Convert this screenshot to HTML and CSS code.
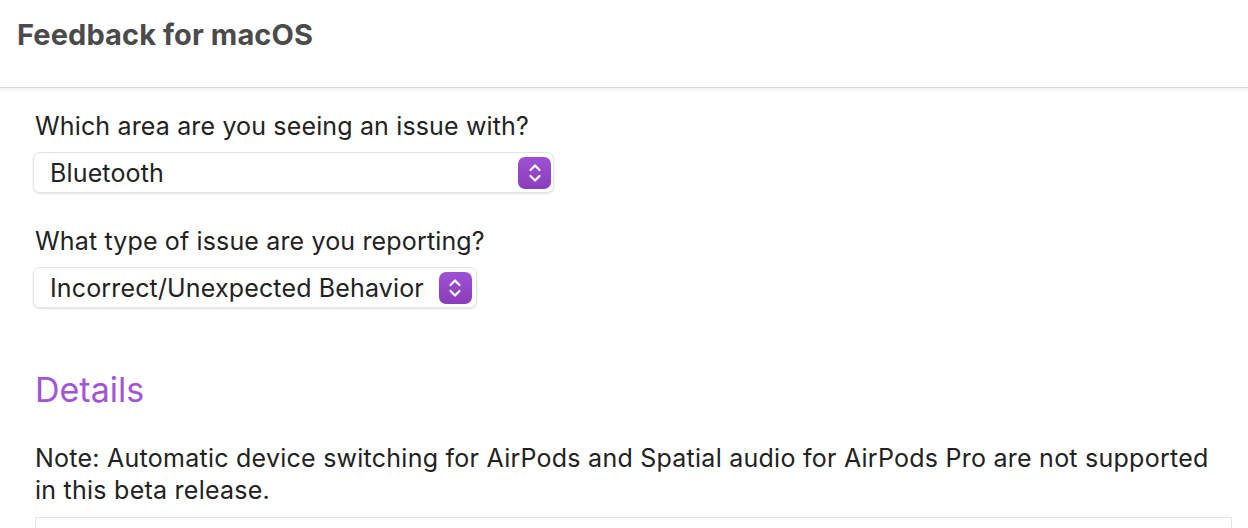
FILE: index.html
```html
<!DOCTYPE html>
<html lang="en">
<head>
    <meta charset="UTF-8">
    <title>Feedback for macOS</title>
    <link rel="stylesheet" href="styles.css">
</head>
<body>
    <header class="topbar">
        <h1>Feedback for macOS</h1>
    </header>

    <main class="form">
        <div class="field">
            <label>Which area are you seeing an issue with?</label>
            <div class="select select-area">
                <span>Bluetooth</span>
                <span class="stepper">
                    <svg width="14" height="22" viewBox="0 0 14 22"><path d="M2.5 8 L7 3.5 L11.5 8 M2.5 14 L7 18.5 L11.5 14" fill="none" stroke="#fff" stroke-width="2.2" stroke-linecap="round" stroke-linejoin="round"/></svg>
                </span>
            </div>
        </div>

        <div class="field">
            <label>What type of issue are you reporting?</label>
            <div class="select">
                <span>Incorrect/Unexpected Behavior</span>
                <span class="stepper">
                    <svg width="14" height="22" viewBox="0 0 14 22"><path d="M2.5 8 L7 3.5 L11.5 8 M2.5 14 L7 18.5 L11.5 14" fill="none" stroke="#fff" stroke-width="2.2" stroke-linecap="round" stroke-linejoin="round"/></svg>
                </span>
            </div>
        </div>

        <h2 class="section-title">Details</h2>

        <p class="note">Note: Automatic device switching for AirPods and Spatial audio for AirPods Pro are not supported in this beta release.</p>

        <div class="textbox"></div>
    </main>
</body>
</html>
```

FILE: styles.css
```css
body {
    margin: 0;
    font-family: Inter, "Noto Sans", sans-serif;
    background: #fff;
    color: #222;
    overflow: hidden;
}
.topbar {
    height: 88px;
    border-bottom: 1px solid #d6d6d6;
    box-shadow: 0 2px 4px rgba(0,0,0,0.06);
    padding: 0 17px;
    box-sizing: border-box;
}
.topbar h1 {
    margin: 0;
    padding-top: 17px;
    font-size: 29px;
    font-weight: 700;
    color: #4b4b4b;
    letter-spacing: 0.1px;
}
.form {
    padding: 22px 16px 0 35px;
}
.field {
    margin-bottom: 32px;
}
.field label {
    display: block;
    font-size: 25px;
    line-height: 32px;
    letter-spacing: 0.15px;
    margin-bottom: 10px;
}
.select {
    display: inline-flex;
    align-items: center;
    gap: 15px;
    height: 41px;
    box-sizing: border-box;
    margin-left: -2px;
    padding: 0 4px 0 16px;
    border: 1px solid #e4e4e4;
    border-radius: 7px;
    box-shadow: 0 1px 2px rgba(0,0,0,0.12);
    font-size: 25px;
    letter-spacing: 0.15px;
}
.select-area {
    width: 521px;
    justify-content: space-between;
    padding-right: 2px;
}
.stepper {
    display: flex;
    align-items: center;
    justify-content: center;
    width: 33px;
    height: 32px;
    border-radius: 7px;
    background: linear-gradient(180deg, #9d52d4, #8a3cbb);
}
.section-title {
    margin: 62px 0 0;
    font-size: 34px;
    font-weight: 400;
    line-height: 40px;
    color: #a155d6;
}
.note {
    margin: 32px 0 0;
    font-size: 25px;
    line-height: 32px;
    letter-spacing: 0.25px;
}
.textbox {
    margin-top: 11px;
    height: 60px;
    border: 1px solid #e4e4e4;
}
```
